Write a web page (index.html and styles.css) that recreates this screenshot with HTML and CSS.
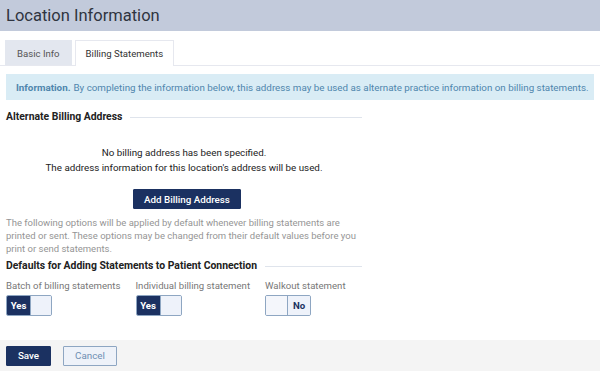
FILE: index.html
```html
<!DOCTYPE html>
<html lang="en">
<head>
    <meta charset="UTF-8">
    <title>Location Information</title>
    <link rel="stylesheet" href="styles.css">
</head>
<body>

<div class="page-header">
    <h1>Location Information</h1>
</div>

<div class="tabs">
    <div class="tab">Basic Info</div>
    <div class="tab active">Billing Statements</div>
</div>

<div class="content">
    <div class="info-box">
        <strong>Information.</strong> By completing the information below, this address may be used as alternate practice information on billing statements.
    </div>

    <div class="left-col">
        <!-- Alternate address -->
        <h2 class="section-title"><span>Alternate Billing Address</span></h2>
        <div class="empty-address">
            <p>No billing address has been specified.</p>
            <p>The address information for this location's address will be used.</p>
            <button class="btn btn-primary btn-add">Add Billing Address</button>
        </div>
        <p class="hint">The following options will be applied by default whenever billing statements are printed or sent. These options may be changed from their default values before you print or send statements.</p>

        <!-- Defaults -->
        <h2 class="section-title defaults"><span>Defaults for Adding Statements to Patient Connection</span></h2>
        <div class="toggles">
            <div class="toggle-group">
                <label>Batch of billing statements</label>
                <div class="toggle on"><span class="yes">Yes</span><span class="knob"></span></div>
            </div>
            <div class="toggle-group">
                <label>Individual billing statement</label>
                <div class="toggle on"><span class="yes">Yes</span><span class="knob"></span></div>
            </div>
            <div class="toggle-group">
                <label>Walkout statement</label>
                <div class="toggle off"><span class="knob"></span><span class="no">No</span></div>
            </div>
        </div>
    </div>
</div>

<div class="footer">
    <button class="btn btn-primary">Save</button>
    <button class="btn btn-secondary">Cancel</button>
</div>

</body>
</html>
```

FILE: styles.css
```css
/* Global Styles */
body {
    font-family: Roboto, "Liberation Sans", sans-serif;
    margin: 0;
    padding: 0;
    background-color: #ffffff;
    color: #333;
    width: 600px;
    height: 371px;
    display: flex;
    flex-direction: column;
    overflow: hidden;
}

.page-header {
    background-color: #c2cadb;
    height: 31px;
    padding: 0 6px;
    display: flex;
    align-items: center;
}

.page-header h1 {
    margin: 0;
    font-size: 16.5px;
    font-weight: 400;
    color: #2f3440;
}

/* Tabs */
.tabs {
    display: flex;
    gap: 3px;
    padding: 9px 5px 0;
    border-bottom: 1px solid #e6e8ef;
}

.tab {
    height: 24px;
    padding: 0 11px;
    display: flex;
    align-items: center;
    font-size: 9.6px;
    color: #555;
    background-color: #e3e7ef;
    border: 1px solid #e3e7ef;
    border-bottom: none;
}

.tab.active {
    background-color: #ffffff;
    color: #333;
    border-color: #e6e8ef;
    margin-bottom: -1px;
    height: 25px;
    padding: 0 10px;
}

.content {
    padding: 8px 6px 0;
    flex: 1;
}

.info-box {
    background-color: #d9ecf5;
    color: #4f86ad;
    font-size: 9.8px;
    height: 26px;
    display: flex;
    align-items: center;
    padding: 0 10px;
    white-space: nowrap;
}

.info-box strong {
    font-weight: 700;
    margin-right: 3px;
}

.left-col {
    width: 356px;
}

.section-title {
    font-size: 10.4px;
    line-height: 12px;
    font-weight: 700;
    color: #222;
    margin: 11px 0 0;
    display: flex;
    align-items: center;
    gap: 8px;
}

.section-title::after {
    content: "";
    flex: 1;
    height: 1px;
    background-color: #dfe4ec;
}

.section-title.defaults {
    margin-top: 5px;
}

.empty-address {
    text-align: center;
    font-size: 9.8px;
    color: #222;
    padding-top: 23px;
}

.empty-address p {
    margin: 0 0 2px;
    line-height: 13px;
}

.btn {
    font-family: Roboto, "Liberation Sans", sans-serif;
    font-size: 9.8px;
    font-weight: 500;
    height: 20px;
    padding: 0 10px;
    cursor: pointer;
    border-radius: 1px;
}

.btn-primary {
    background-color: #1b3161;
    color: #ffffff;
    border: 1px solid #1b3161;
}

.btn-secondary {
    background-color: #eef2f9;
    color: #6f8fb3;
    border: 1px solid #8ea6c2;
    font-weight: 400;
}

.btn-add {
    display: block;
    margin: 15px 0 0 127px;
    width: 108px;
    padding: 0;
}

.hint {
    font-size: 9.5px;
    color: #959595;
    margin: 7px 0 0;
    line-height: 13px;
}

.toggles {
    display: flex;
    margin-top: 8px;
}

.toggle-group {
    flex: none;
    width: 129.5px;
}

.toggle-group label {
    display: block;
    font-size: 9.6px;
    line-height: 12px;
    color: #777;
    margin-bottom: 3px;
    white-space: nowrap;
}

.toggle {
    display: flex;
    width: 44px;
    height: 19px;
    border: 1px solid #8ea6c2;
    border-radius: 2px;
    overflow: hidden;
}

.toggle .yes {
    background-color: #1b3161;
    color: #ffffff;
    width: 23px;
    font-size: 9.6px;
    font-weight: 700;
    display: flex;
    align-items: center;
    justify-content: center;
}

.toggle .knob {
    flex: 1;
    background-color: #eef2fa;
}

.toggle.on .knob {
    border-left: 1px solid #8ea6c2;
}

.toggle.off .knob {
    background-color: #f4f6fb;
    border-right: 1px solid #8ea6c2;
}

.toggle .no {
    width: 22px;
    background-color: #eef2fa;
    color: #1b3161;
    font-size: 9.6px;
    font-weight: 700;
    display: flex;
    align-items: center;
    justify-content: center;
}

.footer {
    background-color: #f4f4f4;
    height: 31px;
    padding: 0 6px;
    display: flex;
    align-items: center;
    gap: 12px;
}

.footer .btn-primary {
    width: 45px;
    padding: 0;
}

.footer .btn-secondary {
    width: 54px;
    padding: 0;
}
```
